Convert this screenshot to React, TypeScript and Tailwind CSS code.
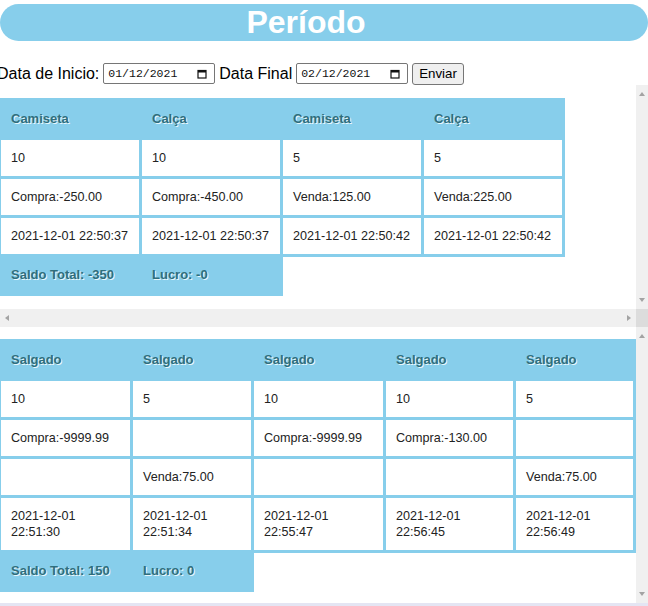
import React from 'react';

const SKY = 'bg-[#87ceeb]';

const periodo1 = {
  heads: ['Camiseta', 'Calça', 'Camiseta', 'Calça'],
  rows: [
    ['10', '10', '5', '5'],
    ['Compra:-250.00', 'Compra:-450.00', 'Venda:125.00', 'Venda:225.00'],
    ['2021-12-01 22:50:37', '2021-12-01 22:50:37', '2021-12-01 22:50:42', '2021-12-01 22:50:42'],
  ],
  saldo: 'Saldo Total: -350',
  lucro: 'Lucro: -0',
};

const periodo2 = {
  heads: ['Salgado', 'Salgado', 'Salgado', 'Salgado', 'Salgado'],
  rows: [
    ['10', '5', '10', '10', '5'],
    ['Compra:-9999.99', '', 'Compra:-9999.99', 'Compra:-130.00', ''],
    ['', 'Venda:75.00', '', '', 'Venda:75.00'],
    ['2021-12-01 22:51:30', '2021-12-01 22:51:34', '2021-12-01 22:55:47', '2021-12-01 22:56:45', '2021-12-01 22:56:49'],
  ],
  saldo: 'Saldo Total: 150',
  lucro: 'Lucro: 0',
};

type Periodo = typeof periodo1;

function Arrow({ dir }: { dir: 'up' | 'down' | 'left' | 'right' }) {
  const pts = {
    up: '0,4 3,0 6,4',
    down: '0,0 6,0 3,4',
    left: '4,0 4,6 0,3',
    right: '0,0 0,6 4,3',
  }[dir];
  const horiz = dir === 'left' || dir === 'right';
  return (
    <svg width={horiz ? 4 : 6} height={horiz ? 6 : 4} viewBox={horiz ? '0 0 4 6' : '0 0 6 4'}>
      <polygon points={pts} fill="#a3a3a3" />
    </svg>
  );
}

function VTrack() {
  return (
    <div className="w-[12px] shrink-0 bg-[#f0f0f0] flex flex-col items-center justify-between py-[7px]">
      <Arrow dir="up" />
      <Arrow dir="down" />
    </div>
  );
}

function Calendar() {
  return (
    <svg width="10" height="10" viewBox="0 0 10 10">
      <rect x="1" y="1.5" width="8" height="7.5" fill="none" stroke="#111" strokeWidth="1.2" />
      <rect x="1" y="1" width="8" height="2.5" fill="#111" />
    </svg>
  );
}

function DateBox({ value }: { value: string }) {
  return (
    <div className="w-[112px] h-[21px] border border-[#767676] rounded-[2px] bg-white flex items-center justify-between pl-[4px] pr-[7px]">
      <span className="font-['Liberation_Mono',monospace] text-[11.5px] text-[#111]">{value}</span>
      <Calendar />
    </div>
  );
}

function Tabela({ data, cols, wrap, footer }: { data: Periodo; cols: string; wrap: boolean; footer: string }) {
  const head = "h-[36px] px-[10px] flex items-center font-bold text-[13px] text-[#2f6e7d] [text-shadow:1px_1px_0_#e8f6fb]";
  const cell = `bg-white min-h-[36px] px-[10px] py-[10px] leading-[16px] text-[12.6px] text-[#222] flex items-center ${wrap ? '' : 'whitespace-nowrap'}`;
  return (
    <div className="ml-[-2px] w-fit">
      <div className={`grid ${cols} gap-[3px] p-[3px] ${SKY}`}>
        {data.heads.map((h, i) => (
          <div key={'h' + i} className={head}>{h}</div>
        ))}
        {data.rows.map((r, ri) =>
          r.map((c, ci) => (
            <div key={ri + '-' + ci} className={cell}>{c}</div>
          ))
        )}
      </div>
      {/* rodapé: saldo e lucro */}
      <div className={`mt-[-3px] grid ${footer} gap-[3px] p-[3px] w-fit ${SKY}`}>
        <div className={head}>{data.saldo}</div>
        <div className={head}>{data.lucro}</div>
      </div>
    </div>
  );
}

export default function App() {
  return (
    <div className="w-[648px] h-[606px] overflow-hidden bg-white font-['Liberation_Sans',Arial,sans-serif] text-black">
      {/* Título */}
      <h1 className={`mt-[4px] h-[37px] rounded-[19px] ${SKY} text-white font-bold text-[32px] leading-[37px] text-center pr-[36px]`}>
        Período
      </h1>

      {/* Filtro */}
      <form className="mt-[21px] ml-[-3px] h-[23px] flex items-center gap-[4px] text-[16px]">
        <label>Data de Inicio:</label>
        <DateBox value="01/12/2021" />
        <label>Data Final</label>
        <DateBox value="02/12/2021" />
        <button type="button" className="h-[22px] px-[6px] bg-[#efefef] border border-[#767676] rounded-[3px] text-[13.3px]">
          Enviar
        </button>
      </form>

      {/* Período 1 */}
      <div className="h-[242px] flex flex-col">
        <div className="flex h-[224px]">
          <div className="flex-1 overflow-hidden pt-[13px]">
            <Tabela data={periodo1} cols="grid-cols-[138px_138px_138px_138px]" wrap={false} footer="grid-cols-[138px_138px]" />
          </div>
          <VTrack />
        </div>
        <div className="flex h-[18px]">
          <div className="flex-1 bg-[#f0f0f0] flex items-center justify-between px-[5px]">
            <Arrow dir="left" />
            <Arrow dir="right" />
          </div>
          <div className="w-[12px] bg-[#dcdcdc]" />
        </div>
      </div>

      {/* Período 2 */}
      <div className="flex h-[276px]">
        <div className="flex-1 overflow-hidden pt-[12px]">
          <Tabela data={periodo2} cols="grid-cols-[129px_118px_129px_127px_117px]" wrap={true} footer="grid-cols-[129px_118px]" />
        </div>
        <VTrack />
      </div>
      <div className="h-[18px] bg-[#e4e5f3]" />
    </div>
  );
}
